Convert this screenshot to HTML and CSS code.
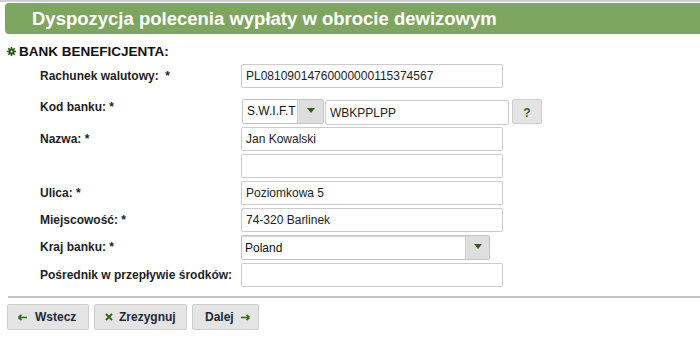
FILE: index.html
```html
<!DOCTYPE html>
<html lang="pl">
<head>
<meta charset="utf-8">
<link rel="stylesheet" href="styles.css">
</head>
<body>
<div class="page">
  <div class="titlebar"><h1 class="title">Dyspozycja polecenia wypłaty w obrocie dewizowym</h1></div>
  <div class="section">
    <svg class="bullet" width="9" height="9" viewBox="0 0 9 9"><g stroke="#2a5716" stroke-width="1.6"><line x1="4.5" y1="0" x2="4.5" y2="9"/><line x1="0" y1="4.5" x2="9" y2="4.5"/><line x1="1.3" y1="1.3" x2="7.7" y2="7.7"/><line x1="7.7" y1="1.3" x2="1.3" y2="7.7"/></g><circle cx="4.5" cy="4.5" r="3" fill="#2a5716"/><circle cx="4.5" cy="4.5" r="1" fill="#fff"/></svg>
    <span>BANK BENEFICJENTA:</span>
  </div>
  <div class="form">
    <div class="row first">
      <div class="label">Rachunek walutowy:&nbsp; *</div>
      <input class="field" value="PL08109014760000000115374567">
    </div>
    <div class="row tall">
      <div class="label top">Kod banku: *</div>
      <div class="combo">
        <div class="select small"><span class="sel-text">S.W.I.F.T</span><span class="sel-arrow"><i class="tri"></i></span></div>
        <input class="field short" value="WBKPPLPP">
        <button class="help">?</button>
      </div>
    </div>
    <div class="row">
      <div class="label">Nazwa: *</div>
      <input class="field" value="Jan Kowalski">
    </div>
    <div class="row">
      <div class="label"></div>
      <input class="field" value="">
    </div>
    <div class="row">
      <div class="label">Ulica: *</div>
      <input class="field" value="Poziomkowa 5">
    </div>
    <div class="row">
      <div class="label">Miejscowość: *</div>
      <input class="field" value="74-320 Barlinek">
    </div>
    <div class="row tall2">
      <div class="label">Kraj banku: *</div>
      <div class="select wide"><span class="sel-text">Poland</span><span class="sel-arrow"><i class="tri"></i></span></div>
    </div>
    <div class="row">
      <div class="label">Pośrednik w przepływie środków:</div>
      <input class="field" value="">
    </div>
  </div>
  <div class="sep"></div>
  <div class="buttons">
    <button class="btn"><svg class="ico" width="9" height="7" viewBox="0 0 9 7"><path d="M0.5 3.5 L3.5 0.8 M0.5 3.5 L3.5 6.2 M0.8 3.5 H9" stroke="#2f6a1a" stroke-width="1.6" fill="none"/></svg>Wstecz</button>
    <button class="btn"><svg class="ico x" width="8" height="8" viewBox="0 0 8 8"><path d="M1 1 L7 7 M7 1 L1 7" stroke="#2f6a1a" stroke-width="2" fill="none"/></svg>Zrezygnuj</button>
    <button class="btn">Dalej<svg class="ico after" width="9" height="7" viewBox="0 0 9 7"><path d="M8.5 3.5 L5.5 0.8 M8.5 3.5 L5.5 6.2 M8.2 3.5 H0" stroke="#2f6a1a" stroke-width="1.6" fill="none"/></svg></button>
  </div>
</div>
</body>
</html>
```
FILE: styles.css
```css
* { box-sizing: border-box; }
html, body { margin: 0; padding: 0; background: #fff; }
body { font-family: "Liberation Sans", Arial, sans-serif; color: #1e1e1e; }
.page { width: 700px; border-top: 2px solid #cfcfcf; padding-top: 1px; }
.titlebar {
  margin-left: 5px; height: 31px; background: #7ea660;
  border-radius: 4px 0 0 4px; display: flex; align-items: center; padding-left: 27px;
}
.title { margin: 0; font-size: 18.5px; font-weight: bold; color: #fff; line-height: 20px; padding-top: 1px; }
.section {
  display: flex; align-items: center; gap: 3px; margin-top: 9px; height: 16px;
  padding-left: 7px; font-size: 13.5px; font-weight: bold; color: #111;
}
.bullet { display: block; }
.form { padding-left: 40px; margin-top: 5px; }
.row { display: flex; align-items: flex-start; height: 24px; margin-top: 3px; }
.row.first { margin-top: 0; }
.row.tall { height: 25px; margin-top: 11px; }
.row.tall2 { height: 25px; }
.label { width: 201px; flex: none; font-size: 12px; font-weight: bold; line-height: 24px; color: #1e1e1e; }
.label.top { line-height: 16px; }
.field {
  width: 262px; height: 24px; border: 1px solid #cccccc; border-radius: 2px;
  padding: 0 4px; margin: 0; font-family: "Liberation Sans", Arial, sans-serif;
  font-size: 12px; color: #222; background: #fff; outline: none;
}
.combo { display: flex; gap: 1px; align-items: flex-start; margin-left: 1px; }
.field.short { width: 184px; height: 25px; margin-top: 1px; }
.select {
  display: flex; height: 25px; border: 1px solid #c3c3c3; border-radius: 2px;
  background: #fff; font-size: 12px; color: #111; overflow: hidden;
}
.select.small { width: 82px; }
.select.wide { width: 249px; box-shadow: inset 0 1px 1px #d8d8d8; }
.sel-text { flex: 1; padding-left: 4px; line-height: 23px; }
.select.wide .sel-text { padding-left: 3px; line-height: 24px; }
.sel-arrow {
  width: 26px; flex: none; background: #dedede; border-left: 1px solid #cfcfcf;
  display: flex; align-items: center; justify-content: center;
}
.select.wide .sel-arrow { width: 24px; }
.tri { display: block; width: 0; height: 0; border-left: 4px solid transparent; border-right: 4px solid transparent; border-top: 5px solid #2f5f1a; margin-top: -2px; }
.help {
  width: 30px; height: 25px; margin-left: 2px; border: 1px solid #cdcdcd; border-radius: 2px;
  background: #e4e4e4; color: #2f5f1a; font-weight: bold; font-size: 12px;
  font-family: "Liberation Sans", Arial, sans-serif; padding: 0; padding-top: 2px;
}
.sep { margin: 9px 0 0 8px; height: 2px; background: #c4c4c4; }
.buttons { display: flex; gap: 5px; padding-left: 7px; margin-top: 6px; }
.btn {
  height: 26px; border: 1px solid #cdcdcd; border-radius: 2px; background: #e4e4e4;
  font-family: "Liberation Sans", Arial, sans-serif; font-size: 12px; font-weight: bold;
  color: #1c2a3a; padding: 0 11px 0 10px; display: flex; align-items: center;
}
.btn:nth-child(1) { width: 82px; }
.btn:nth-child(2) { width: 93px; }
.btn:nth-child(3) { width: 67px; padding-left: 12px; }
.ico { display: block; flex: none; margin-right: 8px; }
.ico.x { margin-right: 6px; }
.ico.after { margin-right: 0; margin-left: 7px; }
```
